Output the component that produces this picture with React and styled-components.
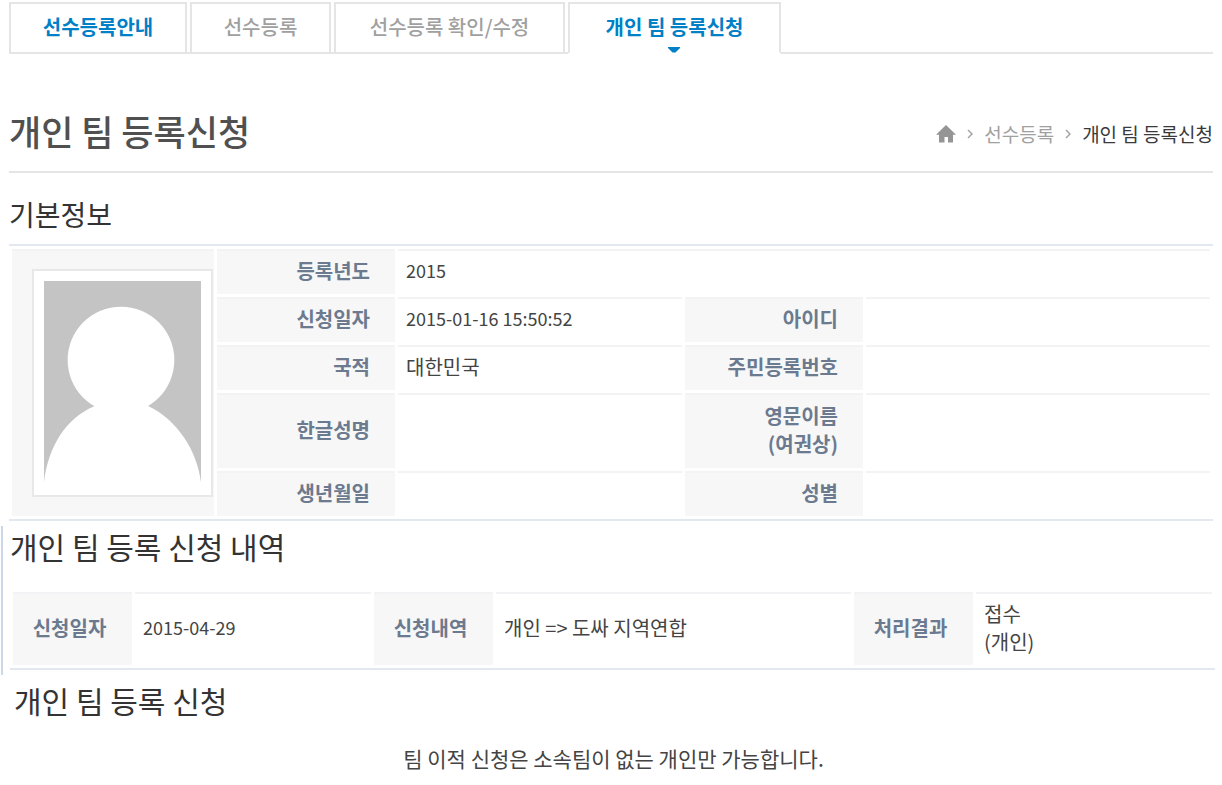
import styled, { createGlobalStyle } from 'styled-components'

const colors = {
  text: '#444444',
  heading: '#3a3a3a',
  active: '#0080c6',
  muted: '#a0a0a0',
  label: '#6b7a8f',
  line: '#e5e5e5',
  tableLine: '#e3e7f0',
  rowLine: '#f3f3f6',
  cell: '#f7f7f7',
}

const GlobalStyle = createGlobalStyle`
  * {
    box-sizing: border-box;
  }

  body {
    margin: 0;
    background: #fff;
    color: ${colors.text};
    font-family: "Noto Sans CJK KR", sans-serif;
    font-size: 20px;
    line-height: 28px;
  }

  a {
    color: inherit;
    text-decoration: none;
  }
`

/**
 * Tabs
 */
const TabList = styled.nav`
  display: flex;
  gap: 3px;
  margin: 0 9px;
  padding-top: 2px;
  border-bottom: 2px solid ${colors.line};
`

const Tab = styled.a`
  position: relative;
  width: ${({ $width }) => $width}px;
  height: 52px;
  margin-bottom: -2px;
  border: 2px solid ${colors.line};
  border-bottom-color: ${({ $current }) => ($current ? '#fff' : colors.line)};
  line-height: 46px;
  text-align: center;
  font-weight: ${({ $strong }) => ($strong ? 700 : 500)};
  && {
    color: ${({ $strong }) => ($strong ? colors.active : colors.muted)};
  }
`

const TabArrow = styled.svg`
  position: absolute;
  left: 50%;
  bottom: -1px;
  margin-left: -7px;
`

/**
 * Page heading with the breadcrumb
 */
const PageHeader = styled.header`
  display: flex;
  justify-content: space-between;
  align-items: center;
  margin: 0 9px;
  padding: 52px 0 15px;
  border-bottom: 2px solid ${colors.line};
`

const PageTitle = styled.h1`
  margin: 0;
  font-size: 35px;
  line-height: 50px;
  font-weight: 500;
  color: #505050;
`

const Breadcrumb = styled.nav`
  display: flex;
  align-items: center;
  gap: 11px;
  padding-top: 6px;
  font-size: 19px;
  color: ${colors.muted};

  a {
    display: flex;
  }

  span {
    color: ${colors.heading};
  }
`

/**
 * Sections and tables
 */
const BasicSection = styled.section`
  margin: 20px 9px 0;
`

const HistorySection = styled.section`
  margin: 5px 7px 0 1px;
  padding: 0 0 5px 7px;
  border-left: 2px solid #cdd7ea;
`

const RequestSection = styled.section`
  margin: 5px 9px 0 14px;
`

const SectionTitle = styled.h2`
  margin: 0 0 ${({ $space }) => $space}px;
  font-size: ${({ $large }) => ($large ? 30 : 28)}px;
  line-height: ${({ $large }) => ($large ? 40 : 42)}px;
  font-weight: 400;
  color: #333;
`

const Table = styled.table`
  width: 100%;
  table-layout: fixed;
  border-collapse: separate;
  border-spacing: 3px;
  border-top: ${({ $topLine }) => ($topLine ? `2px solid ${colors.tableLine}` : 'none')};
  border-bottom: 2px solid ${colors.tableLine};
`

const Col = styled.col`
  width: ${({ $width }) => ($width ? `${$width}px` : 'auto')};
`

const Row = styled.tr`
  height: ${({ $height }) => $height || 45}px;
`

const Label = styled.th`
  padding: 0 ${({ $center }) => ($center ? 6 : 25)}px 3px 0;
  border-top: 2px solid ${colors.rowLine};
  background: ${colors.cell};
  color: ${colors.label};
  font-weight: 700;
  text-align: ${({ $center }) => ($center ? 'center' : 'right')};
`

const Value = styled.td`
  padding: 0 0 ${({ $numeric }) => ($numeric ? 6 : 3)}px 8px;
  border-top: 2px solid ${colors.rowLine};
  font-size: ${({ $numeric }) => ($numeric ? 18 : 20)}px;
`

const PhotoCell = styled.td`
  padding: 18px 1px 0 20px;
  border-top: 2px solid ${colors.rowLine};
  background: ${colors.cell};
  vertical-align: top;
`

const PhotoFrame = styled.div`
  padding: 10px;
  border: 2px solid #e8e8e8;
  background: #fff;

  svg {
    display: block;
    width: 100%;
  }
`

const Note = styled.p`
  margin: 0;
  font-size: 21px;
  text-align: center;
`

const tabs = [
  { label: '선수등록안내', width: 178, strong: true },
  { label: '선수등록', width: 141 },
  { label: '선수등록 확인/수정', width: 231 },
  { label: '개인 팀 등록신청', width: 213, strong: true, current: true },
]

const Chevron = () => (
  <svg width="6" height="10" viewBox="0 0 6 10" fill="none" stroke="#a0a0a0" strokeWidth="1.4" aria-hidden="true">
    <path d="M1 1l4 4-4 4" />
  </svg>
)

const HomeIcon = () => (
  <svg width="20" height="18" viewBox="0 0 20 18" fill="#959595" aria-hidden="true">
    <path d="M10 0L20 9.800h-3V17.500h-5V12H8.500v5.500H3V9.800H0z" />
  </svg>
)

const Portrait = () => (
  <svg viewBox="0 0 156 203" role="img" aria-label="사진">
    <rect width="156" height="203" fill="#c4c4c4" />
    <circle cx="76.500" cy="78.500" r="53" fill="#fff" />
    <path d="M0 203V200C4 165 22 136 50 124.500L76 110L104 124.500C132 138 152 168 156 200V203z" fill="#fff" />
  </svg>
)

const App = () => {
  return (
    <>
      <GlobalStyle />

      <TabList>
        {tabs.map(({ label, width, strong, current }) => (
          <Tab
            key={label}
            href="#"
            $width={width}
            $strong={strong}
            $current={current}
            aria-current={current ? 'page' : undefined}
          >
            {label}
            {current && (
              <TabArrow width="12" height="6" viewBox="0 0 12 6" fill={colors.active} aria-hidden="true">
                <path d="M0 0h12v1L7.500 5.500h-3L0 1z" />
              </TabArrow>
            )}
          </Tab>
        ))}
      </TabList>

      <main>
        <PageHeader>
          <PageTitle>개인 팀 등록신청</PageTitle>
          <Breadcrumb>
            <a href="#" aria-label="홈"><HomeIcon /></a>
            <Chevron />
            <a href="#">선수등록</a>
            <Chevron />
            <span>개인 팀 등록신청</span>
          </Breadcrumb>
        </PageHeader>

        <BasicSection>
          <SectionTitle $space={9}>기본정보</SectionTitle>
          <Table $topLine>
            <colgroup>
              <Col $width={202} />
              <Col $width={178} />
              <Col $width={284} />
              <Col $width={178} />
              <Col />
            </colgroup>
            <tbody>
              <Row>
                <PhotoCell rowSpan={5}>
                  <PhotoFrame><Portrait /></PhotoFrame>
                </PhotoCell>
                <Label scope="row">등록년도</Label>
                <Value colSpan={3} $numeric>2015</Value>
              </Row>
              <Row>
                <Label scope="row">신청일자</Label>
                <Value $numeric>2015-01-16 15:50:52</Value>
                <Label scope="row">아이디</Label>
                <Value />
              </Row>
              <Row>
                <Label scope="row">국적</Label>
                <Value>대한민국</Value>
                <Label scope="row">주민등록번호</Label>
                <Value />
              </Row>
              <Row $height={75}>
                <Label scope="row">한글성명</Label>
                <Value />
                <Label scope="row">영문이름<br />(여권상)</Label>
                <Value />
              </Row>
              <Row>
                <Label scope="row">생년월일</Label>
                <Value />
                <Label scope="row">성별</Label>
                <Value />
              </Row>
            </tbody>
          </Table>
        </BasicSection>

        <HistorySection>
          <SectionTitle $large $space={23}>개인 팀 등록 신청 내역</SectionTitle>
          <Table>
            <colgroup>
              <Col $width={119} />
              <Col $width={236} />
              <Col $width={119} />
              <Col />
              <Col $width={119} />
              <Col $width={236} />
            </colgroup>
            <tbody>
              <Row $height={73}>
                <Label scope="row" $center>신청일자</Label>
                <Value $numeric>2015-04-29</Value>
                <Label scope="row" $center>신청내역</Label>
                <Value>개인 =&gt; 도싸 지역연합</Value>
                <Label scope="row" $center>처리결과</Label>
                <Value>접수<br />(개인)</Value>
              </Row>
            </tbody>
          </Table>
        </HistorySection>

        <RequestSection>
          <SectionTitle $large $space={24}>개인 팀 등록 신청</SectionTitle>
          <Note>팀 이적 신청은 소속팀이 없는 개인만 가능합니다.</Note>
        </RequestSection>
      </main>
    </>
  )
}

export default App
